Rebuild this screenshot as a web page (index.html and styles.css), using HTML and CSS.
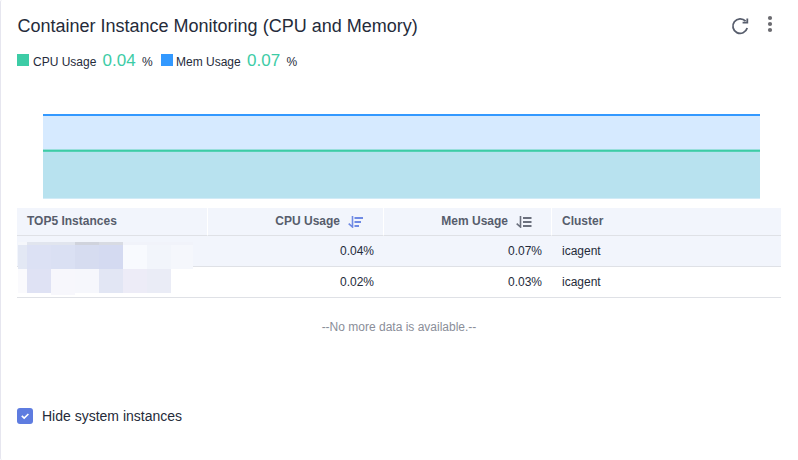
FILE: index.html
```html
<!DOCTYPE html>
<html lang="en">
<head>
<meta charset="utf-8">
<title>Container Instance Monitoring</title>
<link rel="stylesheet" href="styles.css">
</head>
<body>
<main class="card">
  <header class="card-header">
    <h1 class="title">Container Instance Monitoring (CPU and Memory)</h1>
    <div class="actions">
      <svg class="refresh" width="20" height="20" viewBox="0 0 20 20"><path d="M17.2 12.1A7.3 7.3 0 1 1 15.6 5.2" fill="none" stroke="#575d6c" stroke-width="1.8"/><path d="M17.3 2.4V6.6H12.6" fill="none" stroke="#575d6c" stroke-width="1.8"/></svg>
      <svg class="more" width="6" height="18" viewBox="0 0 6 18"><g fill="#6b6b70"><circle cx="3" cy="3" r="2.1"/><circle cx="3" cy="9" r="2.1"/><circle cx="3" cy="15" r="2.1"/></g></svg>
    </div>
  </header>
  <div class="legend">
    <span class="swatch cpu"></span><span class="name cpu-name">CPU Usage</span><span class="value">0.04</span><span class="unit">%</span>
    <span class="swatch mem"></span><span class="name mem-name">Mem Usage</span><span class="value">0.07</span><span class="unit">%</span>
  </div>
  <svg class="chart" width="717" height="85" viewBox="0 0 717 85">
    <rect width="717" height="84.5" fill="#d6eaff"/>
    <rect y="37" width="717" height="47.5" fill="#b8e2ef"/>
    <rect width="717" height="2" fill="#3399ff"/>
    <rect y="35.6" width="717" height="2.2" fill="#3dcca6"/>
  </svg>
  <div class="table-wrap">
    <table>
      <colgroup><col class="c1"><col class="c2"><col class="c3"><col class="c4"></colgroup>
      <thead><tr>
        <th>TOP5 Instances</th>
        <th class="num"><span class="sortable">CPU Usage<svg class="sort" width="16" height="12" viewBox="0 0 16 12"><path d="M4.5 0V11L.7 7.6" fill="none" stroke="#6f8ae4" stroke-width="1.6"/><path d="M6.5 2H15M6.5 6H13M6.5 10H11" stroke="#6f8ae4" stroke-width="2"/></svg></span></th>
        <th class="num"><span class="sortable">Mem Usage<svg class="sort" width="16" height="12" viewBox="0 0 16 12"><path d="M4.5 0V11L.7 7.6" fill="none" stroke="#6b707d" stroke-width="1.6"/><path d="M7 2H15.5M7 6H15.5M7 10H15.5" stroke="#6b707d" stroke-width="2"/></svg></span></th>
        <th>Cluster</th>
      </tr></thead>
      <tbody>
        <tr class="active"><td></td><td class="num">0.04%</td><td class="num">0.07%</td><td>icagent</td></tr>
        <tr><td></td><td class="num">0.02%</td><td class="num">0.03%</td><td>icagent</td></tr>
      </tbody>
    </table>
    <svg class="mask" width="175" height="53" viewBox="0 0 175 53" shape-rendering="crispEdges">
      <path d="M0 0H9V3H0z" fill="#f5f7fb"/><path d="M9 0H57V3H9z" fill="#e1e5ee"/><path d="M57 0H81V3H57z" fill="#d0d3dc"/><path d="M81 0H105V3H81z" fill="#d8dbe3"/><path d="M105 0H175V3H105z" fill="#f1f3fa"/>
      <path d="M0 3H9V27H0z" fill="#e3e8f4"/><path d="M9 3H33V27H9z" fill="#dce1f4"/><path d="M33 3H57V27H33z" fill="#dae0f3"/><path d="M57 3H81V27H57z" fill="#d6dcf0"/><path d="M81 3H105V27H81z" fill="#d4daf1"/><path d="M105 3H129V27H105z" fill="#f8fafe"/><path d="M129 3H153V27H129z" fill="#f2f5fb"/><path d="M153 3H175V27H153z" fill="#f5f7fc"/>
      <path d="M0 27H9V51H0z" fill="#fafafd"/><path d="M9 27H33V51H9z" fill="#dfe2f4"/><path d="M33 27H57V53H33z" fill="#f7f7fc"/><path d="M57 27H81V51H57z" fill="#f6f7fc"/><path d="M81 27H105V51H81z" fill="#e2e6f4"/><path d="M105 27H129V51H105z" fill="#edecf7"/><path d="M129 27H153V51H129z" fill="#eaecf6"/>
    </svg>
  </div>
  <p class="empty">--No more data is available.--</p>
  <label class="option"><span class="check"><svg width="16" height="16" viewBox="0 0 16 16"><path d="M4.8 7.8L7.2 10.1L11.4 6" fill="none" stroke="#fff" stroke-width="1.6"/></svg></span>Hide system instances</label>
</main>
</body>
</html>
```
FILE: styles.css
```css
* { box-sizing: border-box; }
body { margin: 0; background: #fff; font-family: "Liberation Sans", Arial, sans-serif; font-size: 12px; color: #252b3a; }
.card { height: 460px; padding: 0 17px 0 16px; border-left: 1px solid #e6e6ef; border-radius: 2px; overflow: hidden; }
.card-header { display: flex; justify-content: space-between; height: 52px; padding-top: 14px; }
.title { margin: 0 0 0 .5px; font-size: 18px; font-weight: 400; line-height: 24px; white-space: nowrap; }
.actions { display: flex; gap: 17px; padding-right: 8px; }
.refresh { margin-top: 2px; }
.more { margin-top: 1px; }
.legend { display: flex; height: 20px; line-height: 20px; white-space: nowrap; }
.swatch { width: 12px; height: 12px; margin-top: 2px; }
.cpu { background: #3dcca6; }
.mem { background: #3399ff; margin-left: 8px; }
.name { margin-left: 4px; width: 69px; }
.cpu-name { width: 69.5px; }
.mem-name { margin-left: 3px; width: 71px; }
.value { font-size: 17px; line-height: 18px; color: #3dcca6; width: 39.5px; }
.unit { width: 11px; }
.chart { display: block; margin: 42px 0 9px 26px; }
.table-wrap { position: relative; }
table { width: 764px; table-layout: fixed; border-collapse: separate; border-spacing: 0; }
.c1 { width: 191px; } .c2 { width: 176px; } .c3 { width: 168px; } .c4 { width: 229px; }
th, td { padding: 0 10px; text-align: left; border-bottom: 1px solid #dfe1e6; }
th { height: 28px; padding-bottom: 2px; background: #f2f5fc; color: #575d6c; font-weight: 700; border-right: 1px solid #fff; }
th:last-child { border-right: 0; }
td { height: 31px; }
.active td { background: #f2f5fc; }
.num { text-align: right; }
th.num { padding-right: 19px; }
.sortable { display: flex; align-items: flex-start; justify-content: flex-end; gap: 8px; height: 14px; line-height: 14px; }
.sort { margin-top: 2px; }
.mask { position: absolute; left: 1px; top: 34px; }
.empty { margin: 22px 0 0; color: #8a8e99; line-height: 14px; text-align: center; }
.option { display: flex; align-items: center; gap: 9px; width: max-content; height: 18px; margin-top: 73px; font-size: 14px; }
.check { width: 16px; height: 16px; border-radius: 3px; background: #5e7ce0; }
.check svg { display: block; }
```
